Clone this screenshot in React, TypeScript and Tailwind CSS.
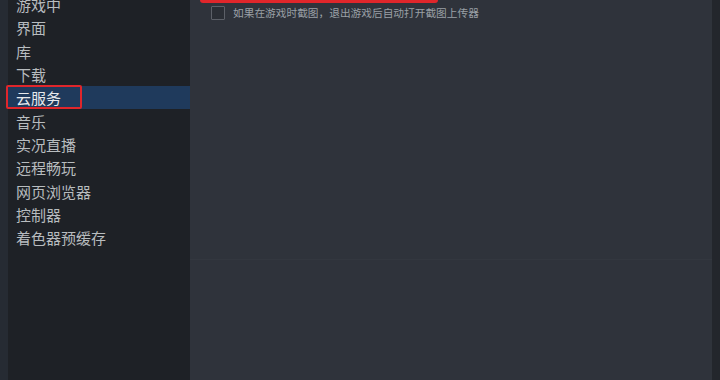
const items = [
  "游戏中",
  "界面",
  "库",
  "下载",
  "云服务",
  "音乐",
  "实况直播",
  "远程畅玩",
  "网页浏览器",
  "控制器",
  "着色器预缓存",
];

const font = { fontFamily: '"Noto Sans CJK SC", "Noto Sans", sans-serif' };

export default function App() {
  return (
    <div
      className="flex h-[380px] w-[720px] overflow-hidden bg-[#262a31]"
      style={font}
    >
      {/* left strip */}
      <div className="w-[8px] shrink-0 bg-[#262b33]" />

      {/* sidebar */}
      <div className="flex w-[182px] shrink-0 flex-col bg-[#1e2126]">
        <div className="-mt-[7px] flex flex-col">
          {items.map((label) => {
            const active = label === "云服务";
            return (
              <div
                key={label}
                className={
                  active
                    ? "relative flex h-[23.3px] items-center bg-[#1f3a5c] pl-[8px] text-[15px] leading-none text-[#e6e9ec]"
                    : "flex h-[23.3px] items-center pl-[8px] text-[15px] leading-none text-[#b8bcbf]"
                }
              >
                {label}
                {active && (
                  <div className="absolute -left-[2px] -top-[1.5px] h-[24px] w-[76px] rounded-[2px] border-2 border-[#e0262b]" />
                )}
              </div>
            );
          })}
        </div>
      </div>

      {/* main panel */}
      <div className="relative flex w-[522px] shrink-0 flex-col bg-[#2f333b]">
        <div className="absolute left-[10px] top-[-6px] h-[9px] w-[238px] rounded-[3px] bg-[#e0262b]" />
        <div className="flex h-[260px] flex-col border-b border-[#33373f]">
          <div className="mt-[6px] flex items-center pl-[21px]">
            <div className="h-[14px] w-[14px] rounded-[1px] border border-[#5c6068] bg-[#2a2e35]" />
            <span className="ml-[8px] text-[10.7px] leading-none text-[#9aa0a6]">
              如果在游戏时截图，退出游戏后自动打开截图上传器
            </span>
          </div>
        </div>
        <div className="flex-1" />
      </div>

      {/* right edge */}
      <div className="flex-1 bg-[#23262c]" />
    </div>
  );
}
